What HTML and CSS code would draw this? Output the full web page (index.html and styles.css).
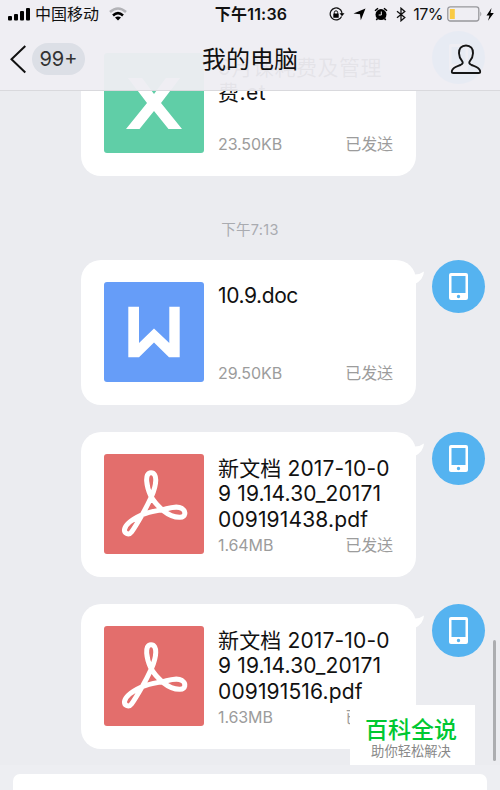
FILE: index.html
```html
<!DOCTYPE html>
<html lang="zh-CN">
<head>
    <meta charset="UTF-8">
    <meta name="viewport" content="width=device-width, initial-scale=1.0">
    <title>我的电脑</title>
    <link rel="stylesheet" href="styles.css">
</head>
<body>
    <svg class="defs" width="0" height="0">
        <symbol id="pdf" viewBox="0 0 100 100">
            <path d="M47 18.8C54 18.8 52.5 31 47.5 42.500C44.500 49 41.500 55 38 61C34 68 30.500 74 27.500 78C24.500 82 20 79 20.500 75.500C21.500 70 30 64.500 38 60.800C45 57.800 52 57 59.500 55.500C66 54 73 51.500 78 54.500C82.500 57.500 81.500 63 76 63.300C70 63.500 64 60.500 59 56.500C54.500 52.500 50 48 47 42.500C42.500 33 40 18.800 47 18.800Z" fill="none" stroke="#fff" stroke-width="5"/>
        </symbol>
        <symbol id="mobile" viewBox="0 0 19 27">
            <path fill="#fff" fill-rule="evenodd" d="M2 0H17Q19 0 19 2V25Q19 27 17 27H2Q0 27 0 25V2Q0 0 2 0ZM2.500 3V20H16.500V3ZM9.500 21.800A1.700 1.700 0 1 0 9.500 25.200A1.700 1.700 0 1 0 9.500 21.800Z"/>
        </symbol>
        <symbol id="tail" viewBox="0 0 10 14">
            <path fill="#fff" d="M0 3.500Q5 3.500 9 .5Q8.500 8.500 0 13Z"/>
        </symbol>
    </svg>

    <div class="phone">
        <header class="header">
            <div class="status">
                <div class="status-left">
                    <svg width="23" height="14" viewBox="0 0 23 14">
                        <rect x="0" y="9" width="4" height="4.500" rx="1"/>
                        <rect x="6" y="7" width="4" height="6.500" rx="1"/>
                        <rect x="12" y="4" width="4" height="9.500" rx="1"/>
                        <rect x="18" y="1" width="4" height="12.500" rx="1"/>
                    </svg>
                    <span class="carrier">中国移动</span>
                    <svg class="wifi" width="18" height="14" viewBox="0 0 18 14">
                        <path d="M1 5Q9-2 17 5" fill="none" stroke="#b3b3b7" stroke-width="2.600"/>
                        <path d="M4 8.400Q9 4 14 8.400" fill="none" stroke="#000" stroke-width="2.600"/>
                        <path d="M6 10.600Q9 8.400 12 10.600L9 13.500Z"/>
                    </svg>
                </div>
                <div class="clock">下午11:36</div>
                <div class="status-right">
                    <svg width="16" height="15" viewBox="0 0 16 15">
                        <path d="M10.500 1.900A6 6 0 1 0 12.600 9.500M8 1.200A6 6 0 0 1 13 7" fill="none" stroke="#111" stroke-width="1.200"/>
                        <path d="M10.500 6.300H15.500L13 9.300Z"/>
                        <rect x="4.300" y="6.500" width="5.400" height="4.200" rx=".5"/>
                        <path d="M5.300 7V5.500a1.700 1.700 0 0 1 3.400 0V7" fill="none" stroke="#111"/>
                    </svg>
                    <svg class="arrow" width="13" height="13" viewBox="0 0 13 13"><path d="M12.500.5L7.800 12.300L7 6.200L.5 5.600Z"/></svg>
                    <svg class="alarm" width="14" height="14" viewBox="0 0 14 14">
                        <circle cx="7" cy="7.600" r="5.500"/>
                        <path d="M1 3.800L4 1.200M13 3.800L10 1.200M3.500 11.500L2.300 13M10.500 11.500L11.700 13" stroke="#000" stroke-width="1.500"/>
                        <path d="M7.300 4.500V8H4.700" fill="none" stroke="#eee" stroke-width="1"/>
                    </svg>
                    <svg class="bluetooth" width="10" height="15" viewBox="0 0 10 15"><path d="M1 4.200L8.800 10.600L5 13.800V1.200L8.800 4.400L1 10.800" fill="none" stroke="#111" stroke-width="1.300"/></svg>
                    <span class="percent">17%</span>
                    <svg class="battery" width="36" height="16" viewBox="0 0 36 16">
                        <rect x=".8" y=".8" width="31" height="14.200" rx="2.500" fill="none" stroke="#98989c" stroke-width="1.300"/>
                        <rect x="2.800" y="3" width="5" height="10" fill="#f9ca44"/>
                        <path d="M33.300 5.500Q35.300 8 33.300 10.500Z" fill="#98989c"/>
                    </svg>
                    <svg class="bolt" width="8" height="13" viewBox="0 0 8 13"><path d="M5.500 0L.5 7.500H3.500L2 12.800L7.800 5H4.500Z"/></svg>
                </div>
            </div>
            <div class="navbar">
                <svg class="back" width="17" height="29" viewBox="0 0 17 29"><path d="M15.300 1L1.500 14.300L15.300 27.500" fill="none" stroke="#111" stroke-width="2"/></svg>
                <span class="unread">99+</span>
                <h1>我的电脑</h1>
                <svg class="person" width="32" height="31" viewBox="0 0 32 31">
                    <path d="M16 1.500C11.300 1.500 8.800 4.800 9 9.200C9.100 12.500 10.400 15 12 16.800C13.400 18.500 12.800 20 10.500 21C6.500 22.600 3 23.500 2 26.500C1.500 28.700 2 29 3.500 29H28.500C30 29 30.500 28.700 30 26.500C29 23.500 25.500 22.600 21.500 21C19.200 20 18.600 18.500 20 16.800C21.600 15 22.900 12.500 23 9.200C23.200 4.800 20.700 1.500 16 1.500Z" fill="none" stroke="#151515" stroke-width="1.900"/>
                </svg>
            </div>
        </header>

        <main class="chat">
            <div class="message">
                <div class="bubble">
                    <svg class="file-icon excel" viewBox="0 0 100 100"><path fill="#fff" d="M24 25H38L50 41L62 25H76L57 50L78 76H64.500L50 58L35.500 76H22L43 50Z"/></svg>
                    <div class="file">
                        <p class="name wide">9月课耗费及管理<br>费.et</p>
                        <p class="info"><span>23.50KB</span><span class="sent">已发送</span></p>
                    </div>
                </div>
                <div class="avatar"><svg width="19" height="27"><use href="#mobile"/></svg></div>
            </div>

            <p class="time">下午7:13</p>

            <div class="message">
                <div class="bubble">
                    <svg class="file-icon word" viewBox="0 0 100 100"><path fill="#fff" d="M24.300 24.700H35V61L50 46.500L65.300 61V24.700H75.700V75.300H65L50 60.500L35 75.300H24.300Z"/></svg>
                    <div class="file">
                        <p class="name narrow">10.9.doc</p>
                        <p class="info"><span>29.50KB</span><span class="sent">已发送</span></p>
                    </div>
                    <svg class="tail" width="10" height="14"><use href="#tail"/></svg>
                </div>
                <div class="avatar"><svg width="19" height="27"><use href="#mobile"/></svg></div>
            </div>

            <div class="message">
                <div class="bubble">
                    <svg class="file-icon pdf"><use href="#pdf"/></svg>
                    <div class="file">
                        <p class="name">新文档 2017-10-0<br>9 19.14.30_20171<br>009191438.pdf</p>
                        <p class="info"><span>1.64MB</span><span class="sent">已发送</span></p>
                    </div>
                    <svg class="tail" width="10" height="14"><use href="#tail"/></svg>
                </div>
                <div class="avatar"><svg width="19" height="27"><use href="#mobile"/></svg></div>
            </div>

            <div class="message">
                <div class="bubble">
                    <svg class="file-icon pdf"><use href="#pdf"/></svg>
                    <div class="file">
                        <p class="name">新文档 2017-10-0<br>9 19.14.30_20171<br>009191516.pdf</p>
                        <p class="info"><span>1.63MB</span><span class="sent">已发送</span></p>
                    </div>
                    <svg class="tail" width="10" height="14"><use href="#tail"/></svg>
                </div>
                <div class="avatar"><svg width="19" height="27"><use href="#mobile"/></svg></div>
            </div>
        </main>

        <footer class="composer">
            <div class="input"></div>
        </footer>

        <div class="scrollbar"></div>
        <div class="watermark">
            <strong>百科全说</strong>
            <span>助你轻松解决</span>
        </div>
    </div>
</body>
</html>
```
FILE: styles.css
```css
* {
    box-sizing: border-box;
}
body {
    margin: 0;
    font-family: Inter, "Noto Sans CJK SC", sans-serif;
    color: #111;
}
h1, p {
    margin: 0;
    font-weight: normal;
}
svg {
    display: block;
    flex-shrink: 0;
}
.defs {
    position: absolute;
}
.phone {
    position: relative;
    width: 500px;
    height: 790px;
    overflow: hidden;
    background: #ebecf0;
    display: flex;
    flex-direction: column;
}

/* header lies over the scrolled messages */
.header {
    position: absolute;
    top: 0;
    left: 0;
    z-index: 2;
    width: 100%;
    height: 91px;
    background: rgba(238, 237, 242, 0.955);
    border-bottom: 1px solid #d9d9dd;
}
.status {
    height: 28px;
    padding: 0 6px 0 8px;
    display: grid;
    grid-template-columns: 1fr auto 1fr;
    align-items: center;
    font-size: 16px;
    line-height: 28px;
}
.status-left, .status-right {
    display: flex;
    align-items: center;
}
.status-right {
    justify-content: flex-end;
}
.carrier {
    margin-left: 4px;
}
.wifi {
    margin-left: 10px;
}
.clock {
    font-weight: 600;
    font-size: 16px;
    letter-spacing: 0.2px;
}
.arrow {
    margin-left: 8px;
}
.alarm {
    margin-left: 8px;
}
.bluetooth {
    margin-left: 8px;
}
.percent {
    margin-left: 7px;
    letter-spacing: -0.5px;
}
.battery {
    margin-left: 4px;
}
.bolt {
    margin-left: 3px;
}
.navbar {
    height: 62px;
    padding: 0 18px 0 10px;
    display: grid;
    grid-template-columns: 22px 53px 1fr 67px;
    align-items: center;
}
.unread {
    height: 32px;
    border-radius: 16px;
    background: #dcdfe6;
    color: #333;
    font-size: 20px;
    line-height: 32px;
    text-align: center;
}
.navbar h1 {
    padding-top: 2px;
    font-size: 24px;
    line-height: 36px;
    text-align: center;
}
.person {
    justify-self: end;
}

.chat {
    height: 765px;
    padding: 31px 15px 0 81px;
}
.message {
    display: flex;
    justify-content: space-between;
    margin-bottom: 27px;
}
.bubble {
    position: relative;
    width: 335px;
    height: 145px;
    padding: 22.4px 23px;
    background: #fff;
    border-radius: 20px;
    display: flex;
    gap: 14px;
}
.tail {
    position: absolute;
    left: 334px;
    top: 11px;
}
.file-icon {
    width: 100px;
    height: 100px;
    border-radius: 3px;
}
.excel {
    background: #60cea7;
}
.word {
    background: #669df8;
}
.pdf {
    background: #e36e6c;
}
.file {
    flex: 1;
    display: flex;
    flex-direction: column;
}
.name {
    height: 82px;
    padding-top: 1.6px;
    font-size: 21px;
    line-height: 25.5px;
    letter-spacing: 0.14px;
    white-space: nowrap;
}
.wide {
    letter-spacing: 0.5px;
}
.narrow {
    padding-top: 0.6px;
    letter-spacing: -0.4px;
}
.info {
    display: flex;
    justify-content: space-between;
    font-size: 16px;
    line-height: 18px;
    letter-spacing: -0.1px;
    color: #9c9c9c;
}
.avatar {
    width: 53px;
    height: 53px;
    border-radius: 50%;
    background: #55b3f0;
    display: flex;
    align-items: center;
    justify-content: center;
}
.time {
    margin: 43px 0 20px;
    padding-right: 66px;
    font-size: 14.5px;
    line-height: 21px;
    letter-spacing: 0.3px;
    text-align: center;
    color: #a9abb0;
}

.composer {
    height: 25px;
    padding: 9px 13px 0;
    background: #edeef2;
}
.input {
    height: 30px;
    border-radius: 7px;
    background: #fff;
}
.scrollbar {
    position: absolute;
    top: 640px;
    right: 4px;
    width: 3px;
    height: 121px;
    border-radius: 2px;
    background: #acadb0;
}
.watermark {
    position: absolute;
    left: 350px;
    top: 705px;
    width: 125px;
    height: 60px;
    padding-right: 3px;
    background: #fff;
    text-align: center;
}
.watermark strong, .watermark span {
    display: block;
}
.watermark strong {
    margin-top: 10px;
    font-size: 23px;
    line-height: 30px;
    font-weight: 500;
    color: #00c832;
}
.watermark span {
    font-size: 13.3px;
    line-height: 13px;
    color: #888;
}
```
